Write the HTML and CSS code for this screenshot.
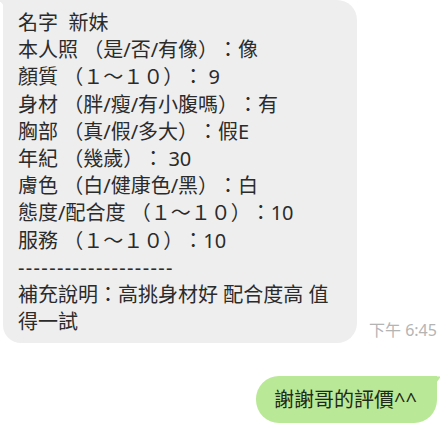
FILE: index.html
```html
<!DOCTYPE html>
<html lang="zh-Hant">
<head>
    <meta charset="UTF-8">
    <meta name="viewport" content="width=device-width, initial-scale=1.0">
    <title>聊天</title>
    <link rel="stylesheet" href="styles.css">
</head>
<body>
    <div class="chat">
        <div class="row">
            <div class="bubble">
                <div>名字&nbsp; 新妹</div>
                <div>本人照 （是/否/有像）：像</div>
                <div>顏質 （１～１０）： 9</div>
                <div>身材 （胖/瘦/有小腹嗎）：有</div>
                <div>胸部 （真/假/多大）：假E</div>
                <div>年紀 （幾歲）： 30</div>
                <div>膚色 （白/健康色/黑）：白</div>
                <div>態度/配合度 （１～１０）：10</div>
                <div>服務 （１～１０）：10</div>
                <div class="dash">--------------------</div>
                <div>補充說明：高挑身材好 配合度高 值得一試</div>
            </div>
            <div class="time">下午 6:45</div>
        </div>
        <div class="row mine">
            <div class="bubble green">謝謝哥的評價^^</div>
        </div>
    </div>
</body>
</html>
```

FILE: styles.css
```css
*{
    box-sizing: border-box;
}
body{
    margin: 0;
    background: #fff;
    font-family: "Noto Sans", "Noto Sans CJK TC", sans-serif;
    color: #2b2b2b;
}
.chat{
    width: 440px;
    padding-left: 3px;
}
.row{
    display: flex;
    align-items: flex-end;
}
.bubble{
    position: relative;
    width: 354px;
    background: #eeeeee;
    border-radius: 0 20px 20px 18px;
    padding: 9px 14px 8px 15px;
    font-size: 20px;
    line-height: 27.2px;
    text-spacing-trim: space-all;
}
/* little tail on the top-left corner */
.bubble::before{
    content: "";
    position: absolute;
    top: 0;
    left: -4px;
    width: 8px;
    height: 9px;
    background: #eeeeee;
    clip-path: polygon(0 0, 100% 0, 100% 100%);
}
.dash{
    letter-spacing: 1.35px;
}
.time{
    margin-left: 12px;
    margin-bottom: 3px;
    font-size: 16px;
    line-height: 20px;
    color: #b4b4b4;
}
.mine{
    justify-content: flex-end;
    margin-top: 33px;
    padding-right: 3px;
}
.green{
    width: auto;
    background: #b9e896;
    border-radius: 23px 0 23px 23px;
    height: 47px;
    padding: 0 20px 0 18px;
    line-height: 47px;
    color: #1f2a18;
}
.green::before{
    left: auto;
    right: -4px;
    width: 6px;
    height: 8px;
    background: #b9e896;
    clip-path: polygon(0 0, 100% 0, 0 100%);
}
```
